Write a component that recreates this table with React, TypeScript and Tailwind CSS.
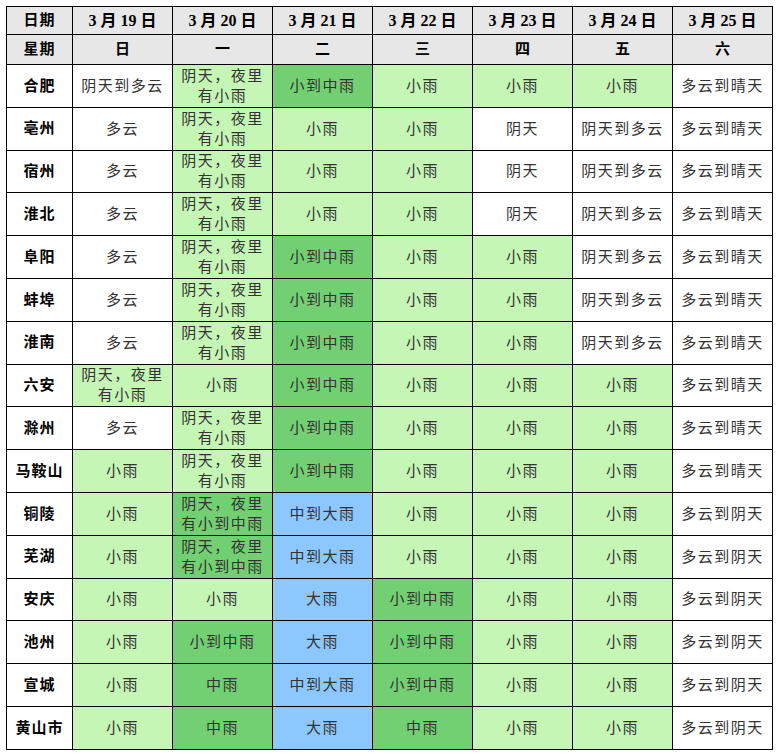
type Tone = "w" | "l" | "m" | "b"

const dates = ["3 月 19 日", "3 月 20 日", "3 月 21 日", "3 月 22 日", "3 月 23 日", "3 月 24 日", "3 月 25 日"]
const weekdays = ["日", "一", "二", "三", "四", "五", "六"]

const YE = "阴天，夜里\n有小雨"
const YEZ = "阴天，夜里\n有小到中雨"

const rows: { city: string; cells: [string, Tone][] }[] = [
  { city: "合肥", cells: [["阴天到多云", "w"], [YE, "l"], ["小到中雨", "m"], ["小雨", "l"], ["小雨", "l"], ["小雨", "l"], ["多云到晴天", "w"]] },
  { city: "亳州", cells: [["多云", "w"], [YE, "l"], ["小雨", "l"], ["小雨", "l"], ["阴天", "w"], ["阴天到多云", "w"], ["多云到晴天", "w"]] },
  { city: "宿州", cells: [["多云", "w"], [YE, "l"], ["小雨", "l"], ["小雨", "l"], ["阴天", "w"], ["阴天到多云", "w"], ["多云到晴天", "w"]] },
  { city: "淮北", cells: [["多云", "w"], [YE, "l"], ["小雨", "l"], ["小雨", "l"], ["阴天", "w"], ["阴天到多云", "w"], ["多云到晴天", "w"]] },
  { city: "阜阳", cells: [["多云", "w"], [YE, "l"], ["小到中雨", "m"], ["小雨", "l"], ["小雨", "l"], ["阴天到多云", "w"], ["多云到晴天", "w"]] },
  { city: "蚌埠", cells: [["多云", "w"], [YE, "l"], ["小到中雨", "m"], ["小雨", "l"], ["小雨", "l"], ["阴天到多云", "w"], ["多云到晴天", "w"]] },
  { city: "淮南", cells: [["多云", "w"], [YE, "l"], ["小到中雨", "m"], ["小雨", "l"], ["小雨", "l"], ["阴天到多云", "w"], ["多云到晴天", "w"]] },
  { city: "六安", cells: [[YE, "l"], ["小雨", "l"], ["小到中雨", "m"], ["小雨", "l"], ["小雨", "l"], ["小雨", "l"], ["多云到晴天", "w"]] },
  { city: "滁州", cells: [["多云", "w"], [YE, "l"], ["小到中雨", "m"], ["小雨", "l"], ["小雨", "l"], ["小雨", "l"], ["多云到晴天", "w"]] },
  { city: "马鞍山", cells: [["小雨", "l"], [YE, "l"], ["小到中雨", "m"], ["小雨", "l"], ["小雨", "l"], ["小雨", "l"], ["多云到晴天", "w"]] },
  { city: "铜陵", cells: [["小雨", "l"], [YEZ, "m"], ["中到大雨", "b"], ["小雨", "l"], ["小雨", "l"], ["小雨", "l"], ["多云到阴天", "w"]] },
  { city: "芜湖", cells: [["小雨", "l"], [YEZ, "m"], ["中到大雨", "b"], ["小雨", "l"], ["小雨", "l"], ["小雨", "l"], ["多云到阴天", "w"]] },
  { city: "安庆", cells: [["小雨", "l"], ["小雨", "l"], ["大雨", "b"], ["小到中雨", "m"], ["小雨", "l"], ["小雨", "l"], ["多云到阴天", "w"]] },
  { city: "池州", cells: [["小雨", "l"], ["小到中雨", "m"], ["大雨", "b"], ["小到中雨", "m"], ["小雨", "l"], ["小雨", "l"], ["多云到阴天", "w"]] },
  { city: "宣城", cells: [["小雨", "l"], ["中雨", "m"], ["中到大雨", "b"], ["小到中雨", "m"], ["小雨", "l"], ["小雨", "l"], ["多云到阴天", "w"]] },
  { city: "黄山市", cells: [["小雨", "l"], ["中雨", "m"], ["大雨", "b"], ["中雨", "m"], ["小雨", "l"], ["小雨", "l"], ["多云到阴天", "w"]] },
]

const toneBg: Record<Tone, string> = {
  w: "bg-white",
  l: "bg-[#c6f6b6]",
  m: "bg-[#72d072]",
  b: "bg-[#8cc8fe]",
}

const font = { fontFamily: '"Liberation Serif", "Noto Sans CJK SC", serif' }

export default function App() {
  return (
    <div className="bg-white w-[781px] h-[755px] pt-[6px] pl-[6px]" style={font}>
      <table className="table-fixed border-collapse border border-black w-[767px]">
        <colgroup>
          <col className="w-[66px]" />
          {dates.map((d) => (
            <col key={d} className="w-[100px]" />
          ))}
        </colgroup>
        <thead>
          <tr className="h-[28px] bg-[#e7e7e7]">
            <th className="border border-black p-0 text-[15px] font-bold tracking-[1px] text-black">日期</th>
            {dates.map((d) => (
              <th key={d} className="border border-black p-0 text-[16px] font-bold text-black">{d}</th>
            ))}
          </tr>
          <tr className="h-[30px] bg-[#e7e7e7]">
            <th className="border border-black p-0 text-[15px] font-bold tracking-[1px] text-black">星期</th>
            {weekdays.map((w) => (
              <th key={w} className="border border-black p-0 text-[15px] font-bold text-black">{w}</th>
            ))}
          </tr>
        </thead>
        <tbody>
          {rows.map((r) => (
            <tr key={r.city} className="h-[42.8px]">
              <td className="border border-black bg-white p-0 text-center text-[15px] font-bold tracking-[1px] text-black">
                {r.city}
              </td>
              {r.cells.map(([text, tone], i) => (
                <td
                  key={i}
                  className={`border border-black text-center text-[15px] leading-[20px] tracking-[1.5px] text-[#333] whitespace-pre-line p-0 ${toneBg[tone]}`}
                >
                  {text}
                </td>
              ))}
            </tr>
          ))}
        </tbody>
      </table>
    </div>
  )
}
